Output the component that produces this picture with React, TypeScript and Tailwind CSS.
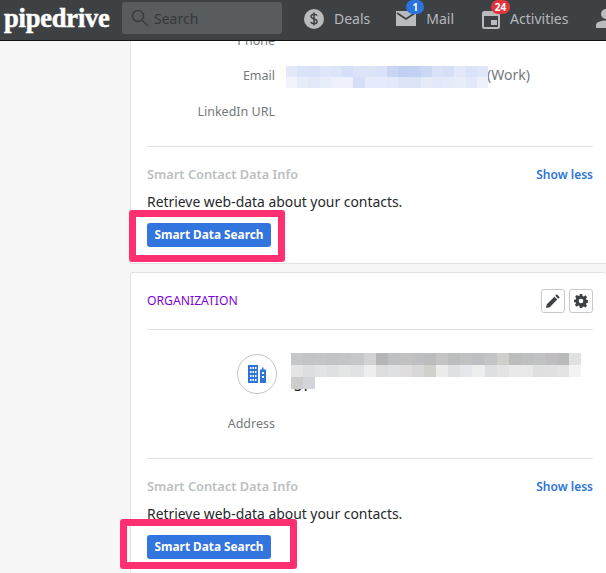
import React from 'react';

const EMAIL_ROWS = [
  ['#e3e9fa', '#dbe3f8', '#d9e2f8', '#dfe6f9', '#dce4f8', '#d5dff7', '#dae3f8', '#dce4f8', '#d9e2f8', '#c8d6f4', '#bfd0f3', '#c3d2f3', '#cad8f5', '#d9e2f8', '#d5dff7', '#e3e9fa', '#dbe3f8', '#dfe6f9'],
  ['#f0f3fc', '#e8edfa', '#e3e9f9', '#e8edfa', '#eef1fb', '#eef1fb', '#d5dff7', '#e5ebfa', '#e5ebfa', '#e3e9f9', '#dce4f8', '#dce4f8', '#e6ebfa', '#e3e9f9', '#e6ebfa', '#e8edfa', '#e3e9f9', '#eef1fb'],
];

const ORG_ROWS = [
  ['#c6c7c8', '#c2c4c5', '#c3c5c6', '#c1c4c6', '#c4c5c7', '#c6c7c8', '#d2d1d3', '#b5b5b5', '#bfc0c1', '#c2c2c3', '#bdbfc0', '#bcbcbc', '#c4c4c4', '#bcbebe', '#bfc1c2', '#bdbfc2', '#c2c4c5', '#cfd0cb', '#bbbcbc', '#bfbfbf', '#c0c2c3', '#bfbdbf', '#bababb', '#e0e1e3'],
  ['#e5e5e5', '#dcdedf', '#e3e3e3', '#dfe0e1', '#e4e5e5', '#e1e2e3', '#eeeeee', '#dddddd', '#e0e1e2', '#dfdddd', '#d8d8d8', '#d0d0cc', '#ececec', '#dfe1e3', '#e5e7ea', '#eeeeef', '#dedfe0', '#e3e3e3', '#e9e9e9', '#e9e8e8', '#dfdfdf', '#e0e0e0', '#e3e3e3', '#f3f3f3'],
  ['#cdcdcd', '#d3d5d8'],
];

function Mosaic({ rows, cell }: { rows: string[][]; cell: string }) {
  return (
    <div className="relative z-[1]">
      {rows.map((row, i) => (
        <div key={i} className="flex">
          {row.map((color, j) => (
            <div key={j} className={cell} style={{ backgroundColor: color }} />
          ))}
        </div>
      ))}
    </div>
  );
}

function NavItem({ icon, label, badge, badgeClass, className }: { icon: React.ReactNode; label: string; badge?: string; badgeClass?: string; className: string }) {
  return (
    <div className={`relative flex shrink-0 items-center ${className}`}>
      {icon}
      {badge && (
        <span className={`absolute -top-[9px] flex h-[14px] items-center justify-center rounded-full text-[10px] font-bold text-white ${badgeClass}`}>
          {badge}
        </span>
      )}
      <span className="text-[14px] whitespace-nowrap text-[#b6b9bb]">{label}</span>
    </div>
  );
}

function SmartData({ highlight }: { highlight: string }) {
  return (
    <div className="relative">
      <div className="flex items-center justify-between">
        <span className="text-[12.8px] font-semibold text-[#bdbfc1]">Smart Contact Data Info</span>
        <span className="text-[12px] font-semibold text-[#2f74dc]">Show less</span>
      </div>
      <p className="mt-[8px] text-[13.9px] leading-[19px] text-[#26292c]">Retrieve web-data about your contacts.</p>
      <button className="mt-[12px] flex h-[24px] w-[124px] items-center justify-center rounded-[3px] bg-[#3375de] text-[11.8px] font-bold text-white">
        Smart Data Search
      </button>
      <div className={`absolute rounded-[3px] border-[7px] border-[#ff2f72] ${highlight}`} />
    </div>
  );
}

export default function App() {
  return (
    <div className="flex h-[573px] w-[606px] flex-col overflow-hidden bg-[#f7f7f7] font-['Noto_Sans','Open_Sans',sans-serif]">
      <header className="z-10 flex h-[41px] shrink-0 items-start overflow-hidden border-b border-[#111314] bg-[#3e4144]">
        <span className="mt-[-1px] w-[122px] shrink-0 pl-[4px] font-['Liberation_Serif',serif] text-[26.5px] leading-[38px] font-bold tracking-[-0.2px] text-white [-webkit-text-stroke:0.5px_white]">pipedrive</span>
        <div className="mt-[2px] flex h-[32px] w-[160px] shrink-0 items-center rounded-[3px] bg-[#595c5e] pl-[9px]">
          <svg width="18" height="18" viewBox="0 0 18 18" fill="none" stroke="#3b3e40" strokeWidth="1.5">
            <circle cx="7" cy="7" r="5.5" />
            <path d="M11 11l6 6" />
          </svg>
          <span className="ml-[5px] text-[14px] text-[#35383a]">Search</span>
        </div>
        <NavItem
          className="mt-[9px] ml-[22px] h-[19px]"
          label="Deals"
          icon={
            <svg className="mr-[10px] shrink-0" width="20" height="20" viewBox="0 0 20 20">
              <circle cx="10" cy="10" r="10" fill="#b9bbbc" />
              <path d="M13 6.6c-.6-.9-1.700-1.300-3-1.300-1.600 0-2.900.8-2.900 2.300 0 3.100 6 1.700 6 4.800 0 1.500-1.400 2.300-3.100 2.300-1.400 0-2.600-.5-3.200-1.500M10 3.600v12.800" fill="none" stroke="#3e4144" strokeWidth="1.500" />
            </svg>
          }
        />
        <NavItem
          className="mt-[9px] ml-[26px] h-[19px]"
          label="Mail"
          badge="1"
          badgeClass="left-[10px] w-[18px] bg-[#2b74e0]"
          icon={
            <svg className="mr-[10px] shrink-0" width="20" height="17" viewBox="0 0 20 17">
              <path d="M0 1h20v15H0z" fill="#b9bbbc" />
              <path d="M1 3l9 6 9-6" fill="none" stroke="#3e4144" strokeWidth="1.800" />
            </svg>
          }
        />
        <NavItem
          className="mt-[9px] ml-[28px] h-[19px]"
          label="Activities"
          badge="24"
          badgeClass="left-[9px] w-[19px] bg-[#e2363f]"
          icon={
            <svg className="mr-[10px] shrink-0" width="18" height="20" viewBox="0 0 18 20">
              <rect x="1" y="3" width="16" height="16" rx="1.500" fill="none" stroke="#b9bbbc" strokeWidth="2" />
              <path d="M1 3h16v4H1zM9 11h6v5H9z" fill="#b9bbbc" />
            </svg>
          }
        />
        <div className="mt-[9px] ml-[28px] shrink-0">
          <svg width="20" height="19" viewBox="0 0 20 19" fill="#b9bbbc">
            <circle cx="10" cy="5" r="5" />
            <path d="M0 19v-3c0-3 5-4.500 10-4.500s10 1.500 10 4.500v3z" />
          </svg>
        </div>
      </header>

      <div className="flex min-h-0 flex-1">
        <aside className="w-[130px] shrink-0" />
        <main className="flex min-w-0 flex-1 flex-col">
          <section className="h-[223px] shrink-0 border-b border-l border-[#e2e3e3] bg-white pr-[13px] pl-[16px]">
            <div className="flex h-[105px] flex-col text-[#75797c]">
              <div className="-mt-[18px] flex h-[36px] shrink-0 items-center text-[12.5px]">
                <span className="w-[128px] text-right">Phone</span>
              </div>
              <div className="flex h-[34px] shrink-0 items-center text-[12.5px]">
                <span className="w-[128px] text-right">Email</span>
                <div className="mt-[2px] ml-[11px] w-[202px]">
                  <Mosaic rows={EMAIL_ROWS} cell="h-[11px] w-[11.22px]" />
                </div>
                <span className="mb-[3px] ml-[-1px] text-[14px]">(Work)</span>
              </div>
              <div className="flex h-[38px] shrink-0 items-center text-[12.5px]">
                <span className="w-[128px] text-right">LinkedIn URL</span>
              </div>
            </div>
            <div className="border-t border-[#e2e3e3] pt-[18px]">
              <SmartData highlight="-left-[18px] top-[45px] h-[52px] w-[156px]" />
            </div>
          </section>

          <section className="mt-[8px] flex-1 rounded-t-[3px] border-t border-l border-[#e2e3e3] bg-white pr-[13px] pl-[16px]">
            <div className="flex h-[57px] items-center justify-between border-b border-[#e2e3e3]">
              <span className="text-[12.2px] text-[#7a05d6]">ORGANIZATION</span>
              <div className="flex gap-[4px]">
                <button className="flex h-[24px] w-[24px] items-center justify-center rounded-[3px] border border-[#c8c9ca]">
                  <svg width="14" height="14" viewBox="0 0 14 14" fill="#3e4144">
                    <path d="M0 14l.8-3.700 7.600-7.600 2.900 2.900-7.600 7.600zM9.300 1.800L10.800.3l2.900 2.900-1.500 1.500z" />
                  </svg>
                </button>
                <button className="flex h-[24px] w-[24px] items-center justify-center rounded-[3px] border border-[#c8c9ca]">
                  <svg width="14" height="14" viewBox="0 0 24 24" fill="#3e4144">
                    <path fillRule="evenodd" d="M10 0h4l.7 3.300 2 .8L19.600 2.300l2.800 2.800-1.800 2.900.8 2 3.300.7v4l-3.300.7-.8 2 1.800 2.900-2.800 2.800-2.900-1.800-2 .8L14 24h-4l-.7-3.300-2-.8-2.900 1.800-2.800-2.800L3.400 16l-.8-2L0 14v-4l3-.7.8-2L2 4.400 4.800 1.600l2.900 1.800 2-.8zM12 8a4 4 0 100 8 4 4 0 000-8z" />
                  </svg>
                </button>
              </div>
            </div>
            <div className="flex h-[129px] border-b border-[#e2e3e3]">
              <div className="flex w-[128px] flex-col items-end">
                <div className="mt-[24px] mr-[-2px] flex h-[40px] w-[40px] items-center justify-center rounded-full border border-[#c2c3c4]">
                  <svg width="18" height="18" viewBox="0 0 18 18">
                    <path fill="#2f74dc" fillRule="evenodd" d="M0 0h10v18H0zM2 2v2h1.500V2zm2.500 0v2H6V2zM7 2v2h1.500V2zM2 6v2h1.500V6zm2.500 0v2H6V6zM7 6v2h1.500V6zM2 10v2h1.500v-2zm2.500 0v2H6v-2zM7 10v2h1.500v-2zM2 14v2h1.500v-2zm2.500 0v2H6v-2zM7 14v2h1.500v-2zM12 4.500h2V2.500h1.500v2H18V18h-6zM14 7v2h2V7zm0 4v2h2v-2z" />
                  </svg>
                </div>
                <span className="mt-[21px] text-[12.5px] text-[#75797c]">Address</span>
              </div>
              <div className="mt-[23px] ml-[16px] w-[291px]">
                <Mosaic rows={ORG_ROWS} cell="h-[12px] w-[12.1px]" />
                <span className="-mt-[13px] block pl-[3px] text-[14px] leading-[19px] font-medium text-[#26292c]">ST</span>
              </div>
            </div>
            <div className="pt-[18px]">
              <SmartData highlight="-left-[27px] top-[42px] h-[50px] w-[177px]" />
            </div>
          </section>
        </main>
      </div>
    </div>
  );
}
